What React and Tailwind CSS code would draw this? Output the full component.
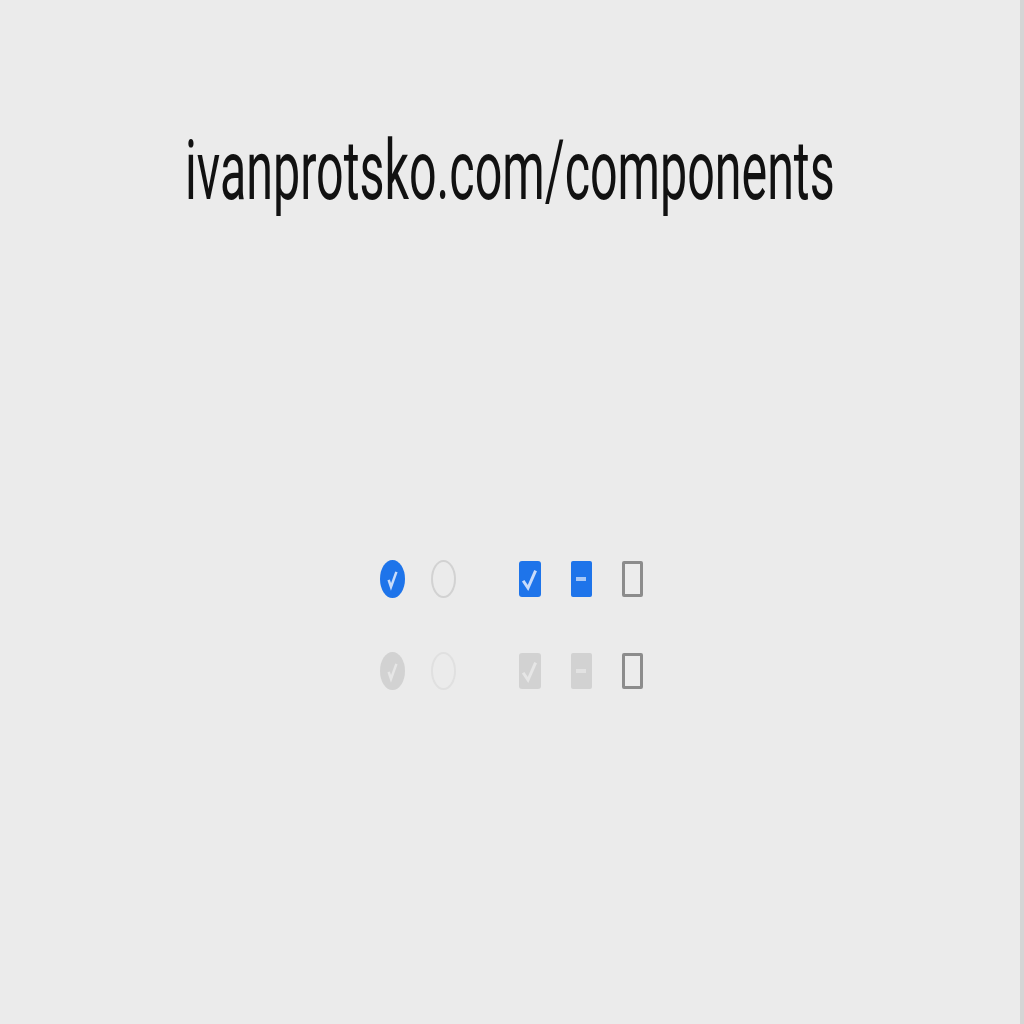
import React from "react";

function Check({ color }) {
  return (
    <svg viewBox="0 0 22 36" className="absolute inset-0 w-full h-full">
      <path d="M5 21 L9 27 L16 11" fill="none" stroke={color} strokeWidth="3" strokeLinecap="square" />
    </svg>
  );
}

function RadioCheck({ color }) {
  return (
    <svg viewBox="0 0 25 38" className="absolute inset-0 w-full h-full">
      <path d="M9 21 L11 27 L16 13" fill="none" stroke={color} strokeWidth="2.5" strokeLinecap="square" />
    </svg>
  );
}

function Row({ disabled }) {
  const fill = disabled ? "bg-[#d2d2d2]" : "bg-[#1e74ea]";
  const mark = disabled ? "#e6e6e6" : "#c9dcfa";
  return (
    <div className="flex items-center h-[40px]">
      <div className="flex items-center gap-[26px]">
        <div className={`relative w-[25px] h-[38px] rounded-[50%] ${fill}`}>
          <RadioCheck color={mark} />
        </div>
        <div className={`w-[25px] h-[38px] rounded-[50%] border-2 ${disabled ? "border-[#e0e0e0]" : "border-[#d2d2d2]"}`} />
      </div>
      <div className="flex items-center gap-[30px] ml-[63px]">
        <div className={`relative w-[22px] h-[36px] rounded-[3px] ${fill}`}>
          <Check color={mark} />
        </div>
        <div className={`w-[21px] h-[36px] rounded-[2px] flex items-center justify-center ${fill}`}>
          <div className={`w-[10px] h-[4px] ${disabled ? "bg-[#e2e2e2]" : "bg-[#a9c8f5]"}`} />
        </div>
        <div className="w-[21px] h-[36px] rounded-[2px] border-[3px] border-[#8c8c8c] bg-[#ececec]" />
      </div>
    </div>
  );
}

export default function App() {
  return (
    <div className="flex w-full h-[1024px] bg-[#ebebeb] overflow-hidden">
      <div className="flex-1 min-w-0 flex flex-col items-center">
        <div
          className="mt-[129px] whitespace-nowrap text-[84px] leading-none text-[#111] scale-x-[0.576] origin-center"
          style={{ fontFamily: "Roboto, 'Liberation Sans', sans-serif" }}
        >
          ivanprotsko.com/components
        </div>
        <div className="mt-[346px] flex flex-col items-center gap-[52px] ml-[2px]">
          <Row disabled={false} />
          <Row disabled={true} />
        </div>
      </div>
      <div className="w-[4px] h-full bg-[#d5d5d5]" />
    </div>
  );
}
